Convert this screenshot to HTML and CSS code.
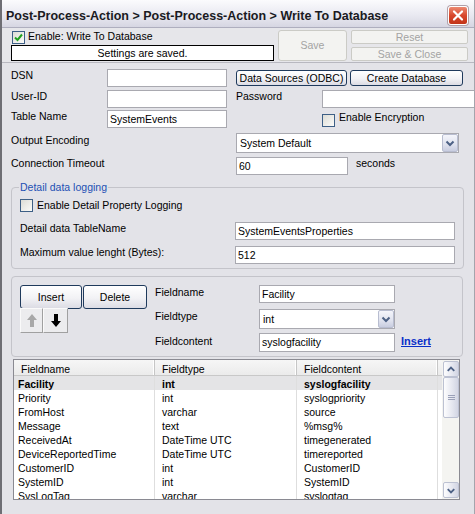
FILE: index.html
```html
<!DOCTYPE html>
<html>
<head>
<meta charset="utf-8">
<title>Write To Database</title>
<link rel="stylesheet" href="styles.css">
</head>
<body>
<div class="window">
  <div class="titlebar">
    <span class="title">Post-Process-Action &gt; Post-Process-Action &gt; Write To Database</span>
    <span class="close"><svg width="18" height="17" viewBox="0 0 18 17"><path d="M5 4.5 L13 12.5 M13 4.5 L5 12.5" stroke="#fff" stroke-width="2.2" stroke-linecap="round"/></svg></span>
  </div>

  <div class="topbar">
    <div class="status-col">
      <div class="chk-row">
        <span class="cb"><svg width="11" height="11" viewBox="0 0 11 11"><path d="M2 5.5 L4.5 8 L9 2.5" fill="none" stroke="#21a121" stroke-width="2"/></svg></span>
        <span class="chk-label">Enable: Write To Database</span>
      </div>
      <div class="status">Settings are saved.</div>
    </div>
    <div class="btn-save">Save</div>
    <div class="btn-stack">
      <div class="btn-dis">Reset</div>
      <div class="btn-dis">Save &amp; Close</div>
    </div>
  </div>

  <div class="content">
    <div class="form">
      <span class="lbl">DSN</span>
      <span class="tb w120"></span>
      <div class="btn-pair">
        <span class="btn btn-odbc">Data Sources (ODBC)</span>
        <span class="btn btn-create">Create Database</span>
      </div>

      <span class="lbl">User-ID</span>
      <span class="tb w120"></span>
      <span class="lbl">Password</span>
      <span class="tb w160"></span>

      <span class="lbl">Table Name</span>
      <span class="tb w120">SystemEvents</span>
      <span></span>
      <div class="enc">
        <span class="cb off"></span>
        <span class="chk-label">Enable Encryption</span>
      </div>

      <span class="lbl lbl-enc">Output Encoding</span>
      <span></span>
      <div class="dd w223">
        <span class="dd-text">System Default</span>
        <span class="dd-btn"><svg width="14" height="16" viewBox="0 0 14 16"><path d="M3.5 6.5 L7 10 L10.5 6.5" fill="none" stroke="#4d6185" stroke-width="2"/></svg></span>
      </div>

      <span class="lbl">Connection Timeout</span>
      <span></span>
      <div class="timeout">
        <span class="tb w112">60</span>
        <span class="unit">seconds</span>
      </div>
    </div>

    <fieldset class="detail">
      <legend>Detail data logging</legend>
      <div class="chk-row2">
        <span class="cb off"></span>
        <span class="chk-label">Enable Detail Property Logging</span>
      </div>
      <div class="detail-grid">
        <span class="lbl">Detail data TableName</span>
        <span class="tb w220">SystemEventsProperties</span>
        <span class="lbl">Maximum value lenght (Bytes):</span>
        <span class="tb w220">512</span>
      </div>
    </fieldset>

    <div class="fields">
      <div class="fields-left">
        <div class="ins-del">
          <span class="btn btn-ins">Insert</span>
          <span class="btn btn-del">Delete</span>
        </div>
        <div class="arrows">
          <span class="arrow-btn up"><svg width="10" height="13" viewBox="0 0 10 13"><path d="M5 0 L10 6 L7 6 L7 13 L3 13 L3 6 L0 6 Z" fill="#a8a8a8"/></svg></span>
          <span class="arrow-btn down"><svg width="10" height="13" viewBox="0 0 10 13"><path d="M5 13 L10 7 L7 7 L7 0 L3 0 L3 7 L0 7 Z" fill="#000"/></svg></span>
        </div>
      </div>
      <div class="fields-grid">
        <span class="lbl">Fieldname</span>
        <span class="tb w136">Facility</span>
        <span></span>
        <span class="lbl">Fieldtype</span>
        <div class="dd w136 h20">
          <span class="dd-text">int</span>
          <span class="dd-btn"><svg width="14" height="16" viewBox="0 0 14 16"><path d="M3.5 6.5 L7 10 L10.5 6.5" fill="none" stroke="#4d6185" stroke-width="2"/></svg></span>
        </div>
        <span></span>
        <span class="lbl lbl-fc">Fieldcontent</span>
        <span class="tb w136 h19">syslogfacility</span>
        <a class="ins-link" href="#">Insert</a>
      </div>
    </div>

    <div class="table">
      <div class="tbl-main">
        <div class="thead">
          <span class="th c1">Fieldname</span>
          <span class="th c2">Fieldtype</span>
          <span class="th c3">Fieldcontent</span>
          <span class="th c4"></span>
        </div>
        <div class="tbody">
          <div class="tr sel"><span class="td c1">Facility</span><span class="td c2">int</span><span class="td c3">syslogfacility</span></div>
          <div class="tr"><span class="td c1">Priority</span><span class="td c2">int</span><span class="td c3">syslogpriority</span></div>
          <div class="tr"><span class="td c1">FromHost</span><span class="td c2">varchar</span><span class="td c3">source</span></div>
          <div class="tr"><span class="td c1">Message</span><span class="td c2">text</span><span class="td c3">%msg%</span></div>
          <div class="tr"><span class="td c1">ReceivedAt</span><span class="td c2">DateTime UTC</span><span class="td c3">timegenerated</span></div>
          <div class="tr"><span class="td c1">DeviceReportedTime</span><span class="td c2">DateTime UTC</span><span class="td c3">timereported</span></div>
          <div class="tr"><span class="td c1">CustomerID</span><span class="td c2">int</span><span class="td c3">CustomerID</span></div>
          <div class="tr"><span class="td c1">SystemID</span><span class="td c2">int</span><span class="td c3">SystemID</span></div>
          <div class="tr"><span class="td c1">SysLogTag</span><span class="td c2">varchar</span><span class="td c3">syslogtag</span></div>
        </div>
      </div>
      <div class="vscroll">
        <span class="sb-btn"><svg width="15" height="15" viewBox="0 0 15 15"><path d="M4 9 L7.5 5.5 L11 9" fill="none" stroke="#4d6185" stroke-width="2"/></svg></span>
        <span class="sb-thumb"><svg width="7" height="6" viewBox="0 0 7 6"><path d="M0 0.5 H7 M0 2.5 H7 M0 4.5 H7" stroke="#9aa0b8" stroke-width="1"/></svg></span>
        <span class="sb-track"></span>
        <span class="sb-btn"><svg width="15" height="15" viewBox="0 0 15 15"><path d="M4 6 L7.5 9.5 L11 6" fill="none" stroke="#4d6185" stroke-width="2"/></svg></span>
      </div>
    </div>
  </div>
</div>
</body>
</html>
```

FILE: styles.css
```css
* { box-sizing: border-box; }
html, body { margin: 0; padding: 0; }
body {
  width: 475px;
  height: 514px;
  overflow: hidden;
  font-family: "Liberation Sans", Arial, sans-serif;
  font-size: 10.5px;
  color: #000;
  background: #e3e3e8;
}
.window {
  width: 475px;
  height: 514px;
  overflow: hidden;
  border-left: 2px solid #6e6e74;
  border-right: 1px solid #a4a4ac;
  background: #e3e3e8;
}

/* title bar */
.titlebar {
  height: 28px;
  display: flex;
  justify-content: space-between;
  align-items: flex-start;
  padding: 0 6px 0 4px;
  background: linear-gradient(#fbfbfd, #e9e9f1 55%, #d6d6e2);
  border-bottom: 1px solid #aeaebe;
}
.title {
  font-size: 12.5px;
  font-weight: bold;
  color: #1a1a22;
  line-height: 24px;
  padding-top: 4px;
  white-space: nowrap;
}
.close {
  margin-top: 6px;
  width: 20px;
  height: 19px;
  border: 1px solid #fff;
  border-radius: 3px;
  background: linear-gradient(#ec8a72, #d8472c 50%, #c23419);
  box-shadow: 0 0 0 1px #b0a0a8;
  display: flex;
  align-items: center;
  justify-content: center;
}

/* top bar */
.topbar {
  height: 35px;
  display: flex;
  align-items: flex-start;
  padding: 2px 0 0 9px;
  background: #e6e6ea;
  border-bottom: 1px solid #b8b8c0;
}
.status-col { width: 263px; }
.chk-row {
  height: 15px;
  display: flex;
  align-items: flex-start;
}
.cb {
  width: 13px;
  height: 13px;
  margin: 1px 3px 0 1px;
  border: 1px solid #3d5f86;
  background: linear-gradient(135deg, #dcdcd6, #fbfbf9);
  display: flex;
  align-items: center;
  justify-content: center;
  flex: none;
}
.chk-label { line-height: 13px; white-space: nowrap; }
.status {
  height: 16px;
  border: 1px solid #000;
  background: #fff;
  text-align: center;
  line-height: 14px;
}
.btn-save {
  margin-left: 4px;
  width: 69px;
  height: 31px;
  border: 1px solid #cbcbc6;
  border-radius: 3px;
  background: #f3f3f1;
  color: #a3a3a3;
  text-align: center;
  line-height: 29px;
}
.btn-stack {
  margin-left: 4px;
  width: 117px;
  display: flex;
  flex-direction: column;
  gap: 3px;
}
.btn-dis {
  height: 14px;
  border: 1px solid #cbcbc6;
  border-radius: 2px;
  background: #f3f3f1;
  color: #a3a3a3;
  text-align: center;
  line-height: 12px;
}

/* content */
.content { padding: 6px 0 0 9px; }
.form {
  display: grid;
  grid-template-columns: 96px 129px 86px 1fr;
  grid-template-rows: 21px 20px 23px 24px 24px;
  align-items: start;
}
.lbl { line-height: 13px; white-space: nowrap; }
.lbl-enc { margin-top: 1px; }
.tb {
  display: block;
  height: 18px;
  border: 1px solid #a9a9b0;
  background: #fff;
  padding: 2px 0 0 2px;
  line-height: 12px;
  white-space: nowrap;
  overflow: hidden;
}
.w112 { width: 112px; }
.w120 { width: 120px; }
.w136 { width: 136px; }
.w160 { width: 160px; }
.w220 { width: 220px; }
.w223 { width: 223px; }
.h19 { height: 19px; }
.h20 { height: 20px; }

.btn-pair {
  grid-column: 3 / 5;
  display: flex;
  gap: 3px;
  margin-top: 1px;
}
.btn {
  display: block;
  height: 16px;
  border: 1px solid #1f3a5c;
  border-radius: 3px;
  background: linear-gradient(#ffffff, #f2f2f5 55%, #dcdce4);
  text-align: center;
  line-height: 14px;
  white-space: nowrap;
}
.btn-odbc { width: 111px; }
.btn-create { width: 113px; }

.enc {
  display: flex;
  align-items: flex-start;
  margin-top: 1px;
}
.enc .cb { margin: 3px 4px 0 0; }

.dd {
  grid-column: 3 / 5;
  display: flex;
  height: 20px;
  border: 1px solid #a9a9b0;
  background: #fff;
}
.dd-text {
  flex: 1;
  padding-left: 3px;
  line-height: 18px;
  white-space: nowrap;
}
.dd-btn {
  width: 16px;
  height: 18px;
  border: 1px solid #b8bdd0;
  border-radius: 2px;
  background: linear-gradient(#f4f5fb, #dfe2ee 60%, #c9cde0);
  display: flex;
  align-items: center;
  justify-content: center;
}
.timeout {
  grid-column: 3 / 5;
  display: flex;
  align-items: flex-start;
}
.unit { margin-left: 8px; line-height: 13px; }

/* detail group */
.detail {
  width: 453px;
  margin: 0;
  padding: 0 0 4px 8px;
  border: 1px solid #c4c4ca;
  border-radius: 4px;
}
.detail legend {
  padding: 0 1px;
  margin-left: -1px;
  color: #1d50b4;
  line-height: 13px;
  font-size: 10.5px;
}
.chk-row2 {
  display: flex;
  align-items: flex-start;
  margin-top: 5px;
  height: 13px;
}
.chk-row2 .cb { margin: 0 4px 0 0; }
.detail-grid {
  margin-top: 10px;
  display: grid;
  grid-template-columns: 215px 220px;
  grid-template-rows: 24px 18px;
  align-items: start;
}

/* fields group */
.fields {
  width: 452px;
  margin-top: 7px;
  padding: 8px 0 3px 8px;
  border: 1px solid #c4c4ca;
  border-radius: 4px;
  display: flex;
  align-items: flex-start;
}
.fields-left { width: 127px; }
.ins-del { display: flex; gap: 1px; }
.btn-ins, .btn-del { height: 24px; line-height: 22px; }
.btn-ins { width: 62px; }
.btn-del { width: 64px; }
.arrows { display: flex; margin-top: -1px; }
.arrow-btn {
  height: 25px;
  border: 1px solid;
  border-color: #fafafa #a0a0a0 #a0a0a0 #fafafa;
  background: #ececee;
  display: flex;
  align-items: center;
  justify-content: center;
}
.arrow-btn.up { width: 23px; }
.arrow-btn.down { width: 25px; }

.fields-grid {
  margin-left: 8px;
  display: grid;
  grid-template-columns: 104px 136px auto;
  grid-template-rows: 24px 24px 20px;
  align-items: start;
}
.fields-grid .dd { grid-column: auto; }
.fields-grid .lbl { margin-top: 1px; }
.fields-grid .lbl-fc { margin-top: 2px; }
.ins-link {
  margin: 2px 0 0 6px;
  font-size: 11px;
  font-weight: bold;
  color: #0a2fc8;
  text-decoration: underline;
  line-height: 13px;
}

/* table */
.table {
  width: 447px;
  height: 141px;
  margin: 2px 0 0 2px;
  border: 1px solid #8a8a92;
  background: #fff;
  display: flex;
  overflow: hidden;
}
.tbl-main { width: 428px; overflow: hidden; }
.thead {
  display: flex;
  height: 16px;
  background: linear-gradient(#f6f6f6, #ebebeb);
  border-bottom: 1px solid #c8c8c8;
}
.th {
  display: block;
  height: 15px;
  padding: 3px 0 0 7px;
  line-height: 12px;
  border-right: 1px solid #c6c6c6;
  box-shadow: inset -1px 0 0 #fff;
  white-space: nowrap;
}
.c1 { width: 141px; }
.c2 { width: 142px; }
.c3 { width: 141px; }
.c4 { width: 4px; border-right: none; box-shadow: none; padding: 0; }
.tbody { height: 123px; overflow: hidden; }
.tr { display: flex; height: 14px; }
.tr.sel { background: #e4e4e6; font-weight: bold; }
.td {
  display: block;
  height: 14px;
  padding: 2px 0 0 7px;
  line-height: 12px;
  border-right: 1px solid #dedede;
  white-space: nowrap;
  overflow: hidden;
}
.td.c1 { padding-left: 4px; }

.vscroll {
  width: 17px;
  display: flex;
  flex-direction: column;
  background: #f4f4f1;
  padding: 1px 0 1px 1px;
}
.sb-btn, .sb-thumb {
  width: 16px;
  border: 1px solid #bcc1d2;
  border-radius: 2px;
  background: linear-gradient(90deg, #fdfdfe, #e4e6ef 60%, #d2d5e3);
  display: flex;
  align-items: center;
  justify-content: center;
}
.sb-btn { height: 16px; }
.sb-thumb { height: 41px; }
.sb-track { flex: 1; }
```
